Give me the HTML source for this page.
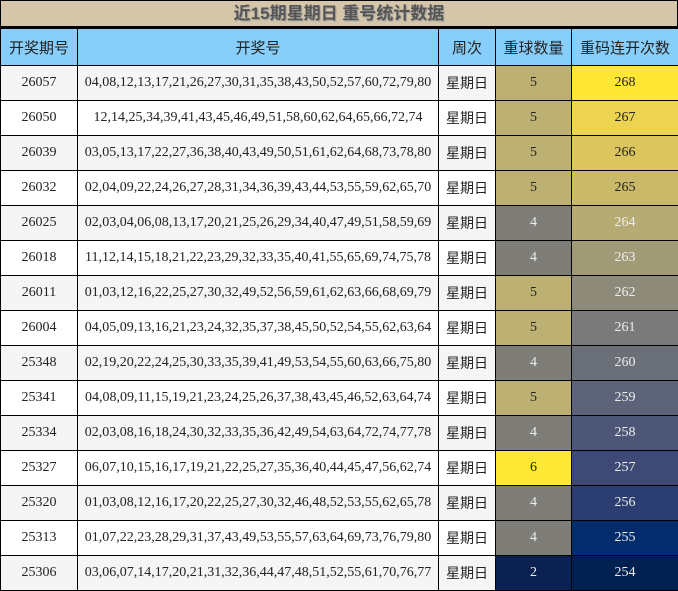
<!DOCTYPE html>
<html><head><meta charset="utf-8"><style>
body{margin:0;background:#fff;width:678px;height:590px;overflow:hidden;font-family:"Liberation Serif","Noto Sans CJK SC",serif;}
.t{background:#d5c6aa;border:1px solid #000;border-bottom:2px solid #000;box-sizing:border-box;height:28px;text-align:center;font:bold 17px/26px "Liberation Sans","Noto Sans CJK SC",sans-serif;color:#555;text-shadow:1px 1px 1px #999;}
table{border-collapse:collapse;width:678px;table-layout:fixed;}
td{border:1px solid #000;text-align:center;font-size:14px;color:#222;height:34px;padding:0;white-space:nowrap;}
th{border:1px solid #000;background:#87cefa;height:36px;font:15px "Noto Sans CJK SC",sans-serif;color:#222;font-weight:normal;padding:0;}
tr.g td{background:#f5f5f5;}
.w{font-family:"Noto Sans CJK SC",sans-serif;font-size:14px;}
.n{font-size:14px;}
</style></head><body>
<div class="t">近15期星期日 重号统计数据</div>
<table>
<colgroup><col style="width:77px"><col style="width:361px"><col style="width:57px"><col style="width:76px"><col style="width:107px"></colgroup>
<tr><th>开奖期号</th><th>开奖号</th><th>周次</th><th>重球数量</th><th>重码连开次数</th></tr>
<tr class="g"><td>26057</td><td class="n">04,08,12,13,17,21,26,27,30,31,35,38,43,50,52,57,60,72,79,80</td><td class="w">星期日</td><td style="background:#bcb172">5</td><td style="background:#ffe733">268</td></tr>
<tr><td>26050</td><td class="n">12,14,25,34,39,41,43,45,46,49,51,58,60,62,64,65,66,72,74</td><td class="w">星期日</td><td style="background:#bcb172">5</td><td style="background:#edd450">267</td></tr>
<tr class="g"><td>26039</td><td class="n">03,05,13,17,22,27,36,38,40,43,49,50,51,61,62,64,68,73,78,80</td><td class="w">星期日</td><td style="background:#bcb172">5</td><td style="background:#dcc55e">266</td></tr>
<tr><td>26032</td><td class="n">02,04,09,22,24,26,27,28,31,34,36,39,43,44,53,55,59,62,65,70</td><td class="w">星期日</td><td style="background:#bcb172">5</td><td style="background:#cbb96a">265</td></tr>
<tr class="g"><td>26025</td><td class="n">02,03,04,06,08,13,17,20,21,25,26,29,34,40,47,49,51,58,59,69</td><td class="w">星期日</td><td style="background:#7f7d78;color:#eee">4</td><td style="background:#b6ab72;color:#eee">264</td></tr>
<tr><td>26018</td><td class="n">11,12,14,15,18,21,22,23,29,32,33,35,40,41,55,65,69,74,75,78</td><td class="w">星期日</td><td style="background:#7f7d78;color:#eee">4</td><td style="background:#a19a77;color:#eee">263</td></tr>
<tr class="g"><td>26011</td><td class="n">01,03,12,16,22,25,27,30,32,49,52,56,59,61,62,63,66,68,69,79</td><td class="w">星期日</td><td style="background:#bcb172">5</td><td style="background:#8d8a7a;color:#eee">262</td></tr>
<tr><td>26004</td><td class="n">04,05,09,13,16,21,23,24,32,35,37,38,45,50,52,54,55,62,63,64</td><td class="w">星期日</td><td style="background:#bcb172">5</td><td style="background:#7a7a7a;color:#eee">261</td></tr>
<tr class="g"><td>25348</td><td class="n">02,19,20,22,24,25,30,33,35,39,41,49,53,54,55,60,63,66,75,80</td><td class="w">星期日</td><td style="background:#7f7d78;color:#eee">4</td><td style="background:#6b6f77;color:#eee">260</td></tr>
<tr><td>25341</td><td class="n">04,08,09,11,15,19,21,23,24,25,26,37,38,43,45,46,52,63,64,74</td><td class="w">星期日</td><td style="background:#bcb172">5</td><td style="background:#5c6277;color:#eee">259</td></tr>
<tr class="g"><td>25334</td><td class="n">02,03,08,16,18,24,30,32,33,35,36,42,49,54,63,64,72,74,77,78</td><td class="w">星期日</td><td style="background:#7f7d78;color:#eee">4</td><td style="background:#4e5677;color:#eee">258</td></tr>
<tr><td>25327</td><td class="n">06,07,10,15,16,17,19,21,22,25,27,35,36,40,44,45,47,56,62,74</td><td class="w">星期日</td><td style="background:#fde935">6</td><td style="background:#3e4a75;color:#eee">257</td></tr>
<tr class="g"><td>25320</td><td class="n">01,03,08,12,16,17,20,22,25,27,30,32,46,48,52,53,55,62,65,78</td><td class="w">星期日</td><td style="background:#7f7d78;color:#eee">4</td><td style="background:#2c3d72;color:#eee">256</td></tr>
<tr><td>25313</td><td class="n">01,07,22,23,28,29,31,37,43,49,53,55,57,63,64,69,73,76,79,80</td><td class="w">星期日</td><td style="background:#7f7d78;color:#eee">4</td><td style="background:#032c6d;color:#eee">255</td></tr>
<tr class="g"><td>25306</td><td class="n">03,06,07,14,17,20,21,31,32,36,44,47,48,51,52,55,61,70,76,77</td><td class="w">星期日</td><td style="background:#0a2152;color:#eee">2</td><td style="background:#00204f;color:#eee">254</td></tr>
</table>
</body></html>
